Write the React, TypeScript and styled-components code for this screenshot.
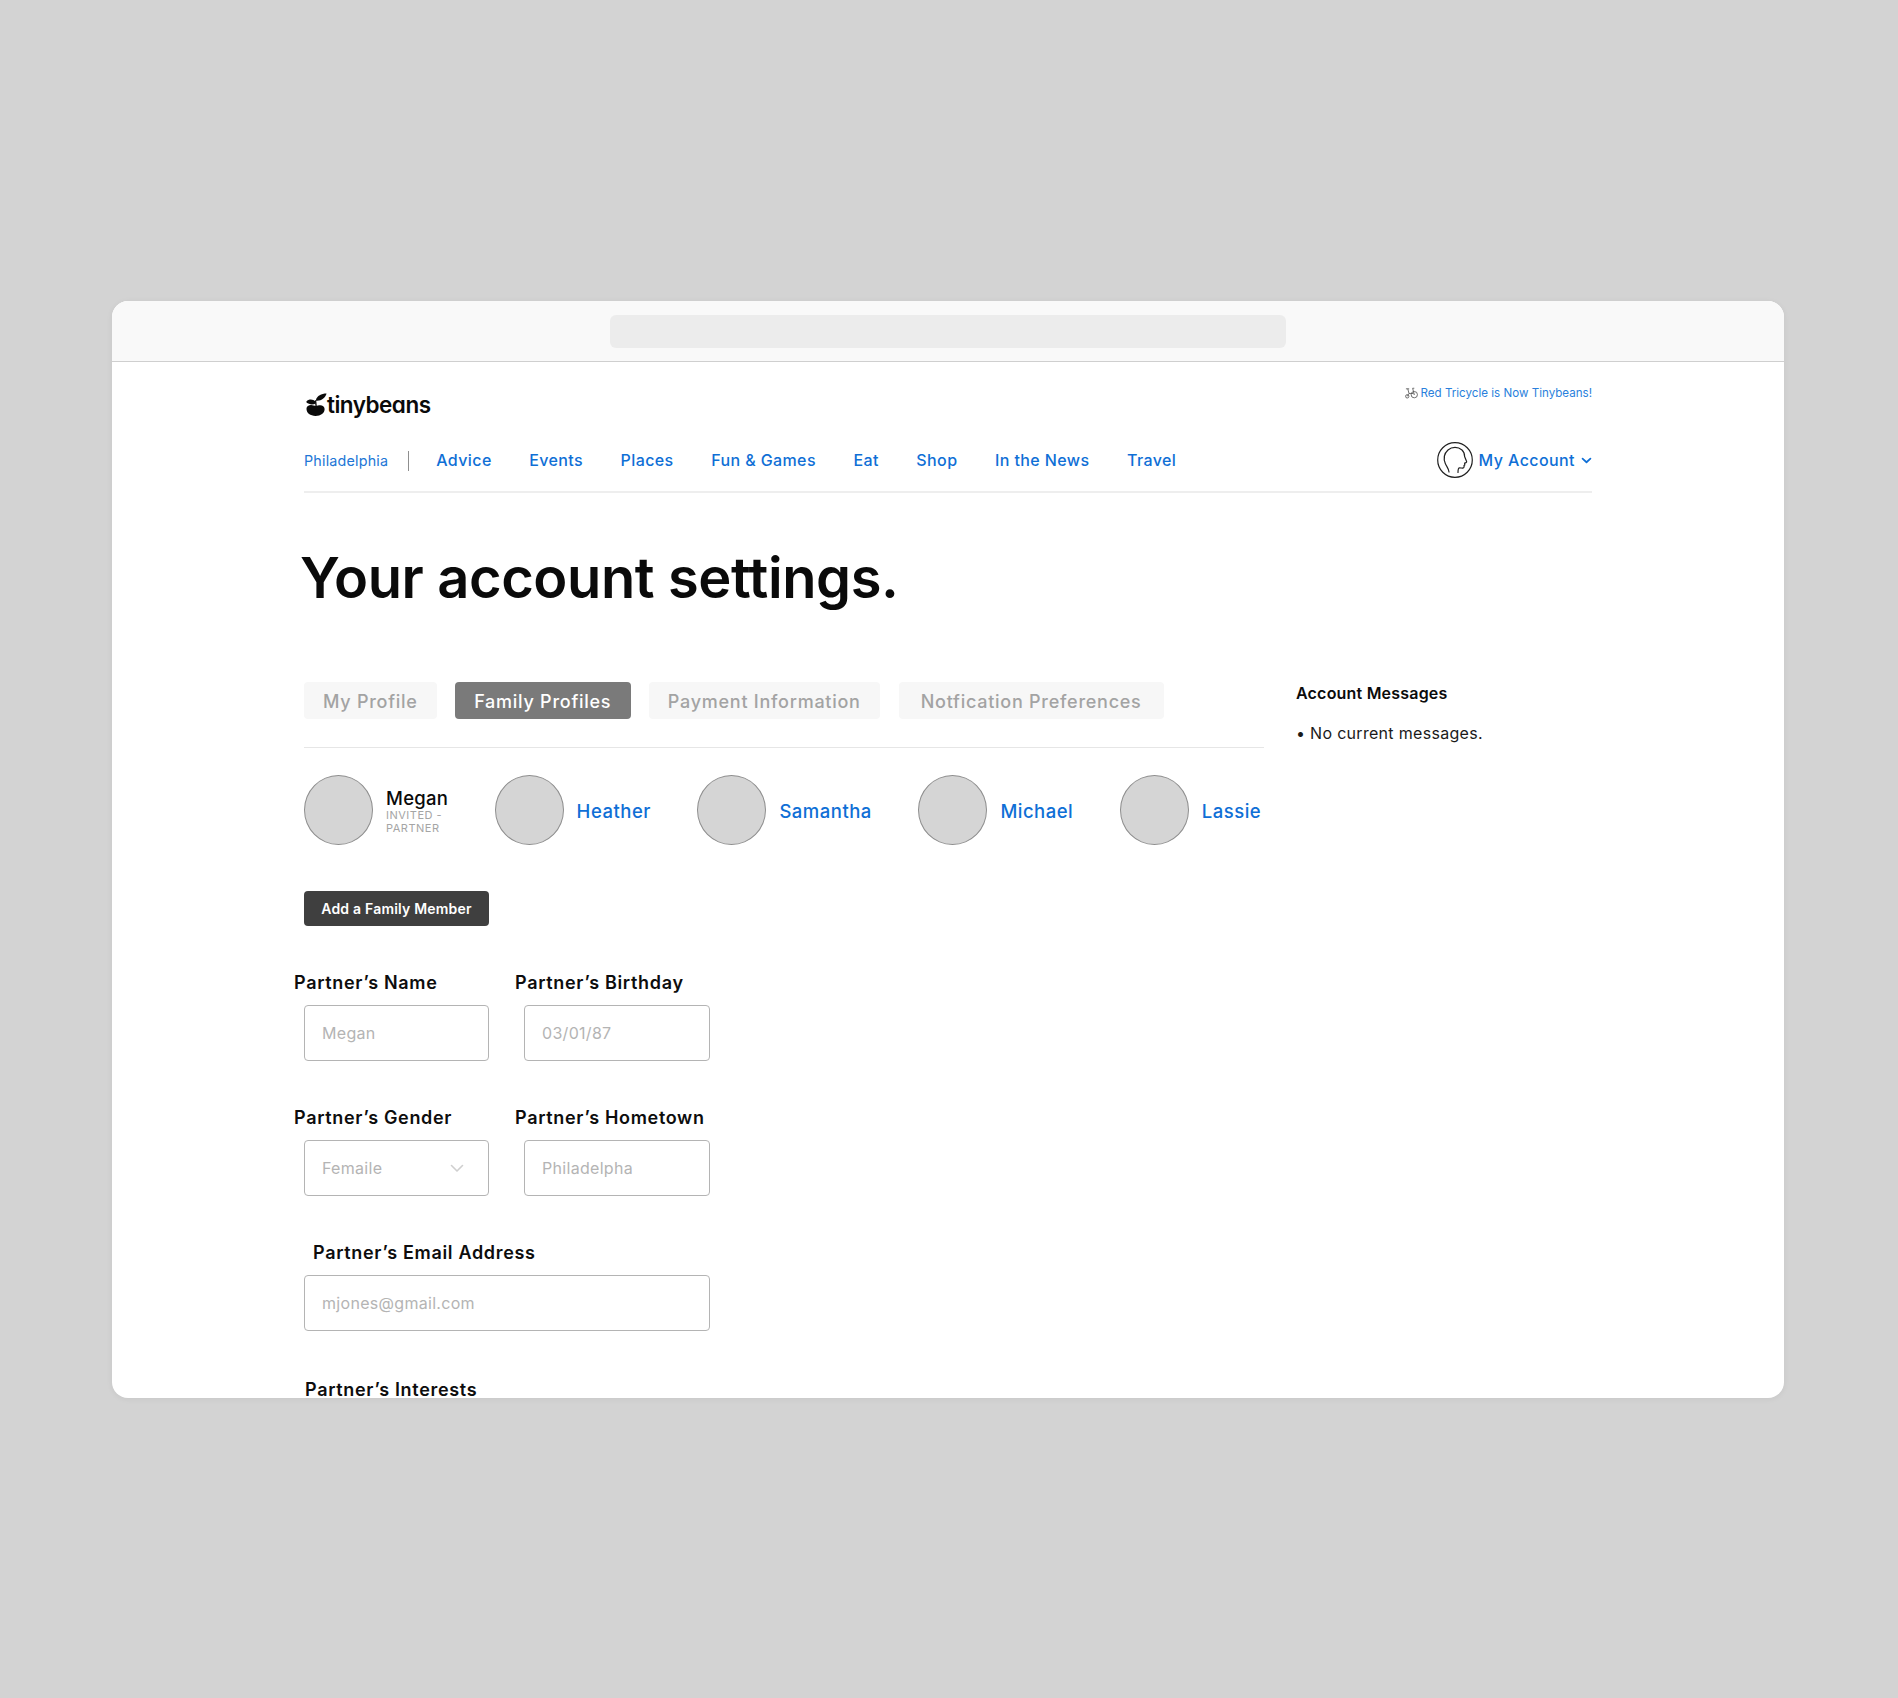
import React from "react";
import styled, { createGlobalStyle } from "styled-components";

const Global = createGlobalStyle`
  html, body { margin: 0; padding: 0; background: #d3d3d3; }
  body { font-family: Inter, "Liberation Sans", sans-serif; color: #0b0b0b; }
  * { box-sizing: border-box; }
`;

const Page = styled.div`
  width: 1898px;
  height: 1698px;
  padding: 301px 114px 0 112px;
  background: #d3d3d3;
`;
const Browser = styled.div`
  width: 1672px;
  height: 1097px;
  background: #fff;
  border-radius: 16px;
  overflow: hidden;
  box-shadow: 0 1px 6px rgba(0, 0, 0, 0.06);
`;
const ChromeBar = styled.div`
  height: 61px;
  background: #f9f9f9;
  border-bottom: 1px solid #cfcfcf;
  display: flex;
  justify-content: center;
  padding-top: 14px;
`;
const UrlBar = styled.div`
  width: 676px;
  height: 33px;
  background: #ececec;
  border-radius: 6px;
`;
const Content = styled.div`
  padding: 0 192px;
`;
const Header = styled.header`
  height: 131px;
  border-bottom: 2px solid #eeeeee;
  display: flex;
  flex-direction: column;
`;
const TopRow = styled.div`
  height: 74px;
  display: flex;
  justify-content: space-between;
  align-items: flex-start;
`;
const Logo = styled.div`
  display: flex;
  align-items: center;
  margin: 29px 0 0 2px;
`;
const LogoText = styled.span`
  font-size: 22.5px;
  font-weight: 600;
  line-height: 28px;
  letter-spacing: -0.5px;
  color: #0a0a0a;
  font-feature-settings: "cv11" 1;
`;
const Notice = styled.div`
  margin-top: 22px;
  display: flex;
  align-items: center;
  gap: 3px;
  font-size: 11.6px;
  line-height: 18px;
  color: #2a7fdc;
`;
const NavRow = styled.nav`
  height: 50px;
  display: flex;
  align-items: flex-start;
`;
const City = styled.a`
  margin-top: 15px;
  font-size: 14.3px;
  line-height: 20px;
  letter-spacing: 0.2px;
  color: #2176d6;
  padding-right: 20px;
  border-right: 1px solid #8f8f8f;
  height: 20px;
`;
const NavLinks = styled.div`
  display: flex;
  gap: 37.5px;
  margin-left: 27px;
  margin-top: 14px;
`;
const NavLink = styled.a`
  font-size: 16px;
  line-height: 20px;
  font-weight: 500;
  letter-spacing: 0.4px;
  color: #0f6fd6;
  white-space: nowrap;
`;
const Account = styled.div`
  margin-left: auto;
  display: flex;
  align-items: center;
  gap: 6px;
  height: 36px;
  margin-top: 6px;
  font-size: 16px;
  font-weight: 500;
  letter-spacing: 0.42px;
  color: #0f6fd6;
`;
const Title = styled.h1`
  margin: 51px 0 70px -4px;
  font-size: 56px;
  line-height: 68px;
  font-weight: 600;
  letter-spacing: -0.4px;
  color: #0a0a0a;
`;
const Main = styled.main`
  display: grid;
  grid-template-columns: 960px 1fr;
  column-gap: 32px;
`;
const Tabs = styled.div`
  display: flex;
  gap: 18px;
  padding-bottom: 28px;
  border-bottom: 1px solid #e6e6e6;
`;
const Tab = styled.button<{ $active?: boolean; $pad: number }>`
  height: 37px;
  padding: 1px ${(p) => p.$pad}px 0;
  border: 0;
  border-radius: 4px;
  font-family: inherit;
  font-size: 18px;
  font-weight: 500;
  letter-spacing: 0.74px;
  background: ${(p) => (p.$active ? "#7a7a7a" : "#f7f7f7")};
  color: ${(p) => (p.$active ? "#ffffff" : "#a3a3a3")};
  &:last-child { margin-left: 1px; }
`;
const People = styled.div`
  display: flex;
  gap: 46.5px;
  margin-top: 27px;
`;
const Person = styled.div`
  display: flex;
  align-items: center;
  gap: 13px;
`;
const Avatar = styled.div`
  width: 69px;
  height: 70px;
  border-radius: 50%;
  background: #d5d5d5;
  border: 1px solid #8e8e8e;
  flex: none;
`;
const PersonName = styled.a<{ $current?: boolean }>`
  display: block;
  font-size: 18.5px;
  line-height: 22px;
  font-weight: 500;
  letter-spacing: ${(p) => (p.$current ? "0.25px" : "0.5px")};
  padding-top: 1px;
  color: ${(p) => (p.$current ? "#0a0a0a" : "#0f6fd6")};
`;
const PersonNote = styled.div`
  width: 61px;
  font-size: 11px;
  line-height: 13px;
  letter-spacing: 0.5px;
  color: #a5a5a5;
`;
const AddButton = styled.button`
  display: block;
  margin: 46px 0 47px;
  width: 185px;
  height: 35px;
  border: 0;
  border-radius: 4px;
  background: #3f3f3f;
  color: #fff;
  font-family: inherit;
  font-size: 14px;
  font-weight: 600;
  letter-spacing: 0.2px;
`;
const FormGrid = styled.div`
  display: grid;
  grid-template-columns: 185px 186px;
  column-gap: 35px;
  row-gap: 47px;
  width: 406px;
`;
const Field = styled.div<{ $wide?: boolean }>`
  grid-column: ${(p) => (p.$wide ? "1 / span 2" : "auto")};
`;
const Label = styled.label<{ $shift: number }>`
  display: block;
  margin: 0 0 12px ${(p) => p.$shift}px;
  font-size: 18px;
  line-height: 20px;
  font-weight: 600;
  letter-spacing: 0.68px;
  color: #0d0d0d;
  white-space: nowrap;
`;
const Input = styled.input`
  display: block;
  width: 100%;
  height: 56px;
  padding: 0 17px;
  border: 1.5px solid #b4b4b4;
  border-radius: 4px;
  background: #fff;
  font-family: inherit;
  font-size: 16px;
  letter-spacing: 0.3px;
  &::placeholder { color: #b4b4b4; opacity: 1; }
`;
const SelectBox = styled.div`
  display: flex;
  align-items: center;
  justify-content: space-between;
  height: 56px;
  padding: 0 24px 0 17px;
  border: 1.5px solid #b4b4b4;
  border-radius: 4px;
  font-size: 16px;
  letter-spacing: 0.3px;
  color: #b4b4b4;
`;
const InterestsLabel = styled(Label)`
  margin: 49px 0 0 1px;
`;
const Side = styled.aside`
  padding-top: 1px;
`;
const SideTitle = styled.h2`
  margin: 0 0 20px;
  font-size: 16px;
  line-height: 20px;
  font-weight: 600;
  letter-spacing: 0.2px;
`;
const SideText = styled.p`
  margin: 0;
  font-size: 16px;
  line-height: 20px;
  letter-spacing: 0.3px;
  color: #1a1a1a;
`;

const Cherry = () => (
  <svg width="21" height="24" viewBox="0 0 22 24" fill="#0a0a0a" aria-hidden="true">
    <path d="M10.5 6.5 C11.5 2.5 16 0 21.5 0 C20.5 4.5 16 8 10.5 7.5 Z" />
    <path d="M0.5 8 C3 5.5 7.5 5.5 10 8.5 L10.2 10.5 C7 12 3 11.5 0.5 9.5 Z" />
    <path d="M10 7 L10.6 13" stroke="#0a0a0a" strokeWidth="1.4" fill="none" />
    <path d="M0.5 16 C0.5 12.3 5 11.3 8 12.6 C9.5 13.2 11 13.2 12.5 12.6 C15.5 11.4 19.5 12.5 19.5 16.2 C19.5 20.8 15.5 23.4 10 23.4 C4.5 23.4 0.5 20.8 0.5 16 Z" />
  </svg>
);

const Tricycle = () => (
  <svg width="13" height="12" viewBox="0 0 14 12" fill="none" stroke="#555" strokeWidth="0.9" aria-hidden="true">
    <circle cx="10" cy="7.8" r="3.4" />
    <circle cx="2.4" cy="9.6" r="1.8" />
    <path d="M1 1.5H4.5M3 1.5L4.3 6.5H8.8L10 7.8M10 7.8L8.2 .9H10M4.3 6.5L2.4 9.6" />
  </svg>
);

const HeadIcon = () => (
  <svg width="36" height="36" viewBox="0 0 36 36" fill="none" stroke="#222" strokeWidth="1.2" strokeLinecap="round" strokeLinejoin="round" aria-hidden="true">
    <circle cx="18" cy="18" r="17.3" />
    <path d="M12 30 C11.5 26 9.5 24.5 8.3 21.5 C6.3 16.5 7.2 11.5 11 8 C15 4.6 21 4.6 25 8 C27 9.8 27.6 12 27.6 14.5 L29.6 19.5 C29.8 20.3 29 20.8 27.6 21 L27.8 23 L27 23.6 L27.1 24.8 C27 26 26 26.2 24.2 26 L22.5 25.8 C21.4 25.8 21 27 21 30.5" />
  </svg>
);

const SmallChevron = () => (
  <svg width="11" height="7" viewBox="0 0 12 8" fill="none" stroke="#0f6fd6" strokeWidth="2" strokeLinecap="round" strokeLinejoin="round" aria-hidden="true">
    <path d="M1.5 1.8 6 6 10.5 1.8" />
  </svg>
);

const FaintChevron = () => (
  <svg width="14" height="9" viewBox="0 0 14 9" fill="none" stroke="#cfcfcf" strokeWidth="1.6" strokeLinecap="round" strokeLinejoin="round" aria-hidden="true">
    <path d="M1.5 1.5 7 7 12.5 1.5" />
  </svg>
);

const navItems = ["Advice", "Events", "Places", "Fun & Games", "Eat", "Shop", "In the News", "Travel"];
const tabs = [
  { label: "My Profile", pad: 19 },
  { label: "Family Profiles", pad: 19.5 },
  { label: "Payment Information", pad: 19 },
  { label: "Notfication Preferences", pad: 22 },
];
const others = ["Heather", "Samantha", "Michael", "Lassie"];

export default function App() {
  return (
    <Page>
      <Global />
      <Browser>
        <ChromeBar>
          <UrlBar />
        </ChromeBar>
        <Content>
          <Header>
            <TopRow>
              <Logo>
                <Cherry />
                <LogoText>tinybeans</LogoText>
              </Logo>
              <Notice>
                <Tricycle />
                <span>Red Tricycle is Now Tinybeans!</span>
              </Notice>
            </TopRow>
            <NavRow>
              <City>Philadelphia</City>
              <NavLinks>
                {navItems.map((n) => (
                  <NavLink key={n}>{n}</NavLink>
                ))}
              </NavLinks>
              <Account>
                <HeadIcon />
                <span>My Account</span>
                <SmallChevron />
              </Account>
            </NavRow>
          </Header>
          <Title>Your account settings.</Title>
          <Main>
            <section>
              <Tabs>
                {tabs.map((t) => (
                  <Tab key={t.label} $pad={t.pad} $active={t.label === "Family Profiles"}>
                    {t.label}
                  </Tab>
                ))}
              </Tabs>
              <People>
                <Person>
                  <Avatar />
                  <div>
                    <PersonName $current>Megan</PersonName>
                    <PersonNote>INVITED - PARTNER</PersonNote>
                  </div>
                </Person>
                {others.map((o) => (
                  <Person key={o}>
                    <Avatar />
                    <PersonName>{o}</PersonName>
                  </Person>
                ))}
              </People>
              <AddButton>Add a Family Member</AddButton>
              <FormGrid>
                <Field>
                  <Label $shift={-10}>Partner’s Name</Label>
                  <Input placeholder="Megan" />
                </Field>
                <Field>
                  <Label $shift={-9}>Partner’s Birthday</Label>
                  <Input placeholder="03/01/87" />
                </Field>
                <Field>
                  <Label $shift={-10}>Partner’s Gender</Label>
                  <SelectBox>
                    Femaile
                    <FaintChevron />
                  </SelectBox>
                </Field>
                <Field>
                  <Label $shift={-9}>Partner’s Hometown</Label>
                  <Input placeholder="Philadelpha" />
                </Field>
                <Field $wide>
                  <Label $shift={9}>Partner’s Email Address</Label>
                  <Input placeholder="mjones@gmail.com" />
                </Field>
              </FormGrid>
              <InterestsLabel $shift={1}>Partner’s Interests</InterestsLabel>
            </section>
            <Side>
              <SideTitle>Account Messages</SideTitle>
              <SideText>• No current messages.</SideText>
            </Side>
          </Main>
        </Content>
      </Browser>
    </Page>
  );
}
